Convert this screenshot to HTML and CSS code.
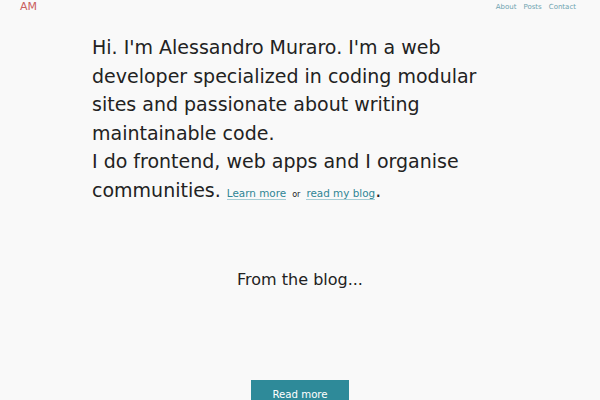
FILE: index.html
```html
<!DOCTYPE html>
<html>
<head>
<meta charset="utf-8">
<link rel="stylesheet" href="styles.css">
</head>
<body>
<header class="top">
  <a class="logo" href="#">AM</a>
  <nav class="nav">
    <a href="#">About</a>
    <a href="#">Posts</a>
    <a href="#">Contact</a>
  </nav>
</header>
<main>
  <section class="intro">
    <p>Hi. I'm Alessandro Muraro. I'm a web developer specialized in coding modular sites and passionate about writing maintainable code.<br>I do frontend, web apps and I organise communities. <a class="link" href="#">Learn more</a> <span class="or">or</span> <a class="link" href="#">read my blog</a>.</p>
  </section>
  <section class="blog">
    <h2 class="blog-title">From the blog...</h2>
    <div class="actions"><a class="btn" href="#">Read more</a></div>
  </section>
</main>
</body>
</html>
```
FILE: styles.css
```css
html, body {
  margin: 0;
  padding: 0;
}
body {
  background: #f9f9f9;
  color: #222;
  font-family: "DejaVu Sans", sans-serif;
  overflow: hidden;
}
a { text-decoration: none; }
.top {
  display: flex;
  justify-content: space-between;
  align-items: flex-start;
  padding: 0 24px 0 20px;
  height: 20px;
}
.logo {
  color: #c9605e;
  font-size: 11px;
  line-height: 13px;
}
.nav {
  display: flex;
  gap: 7px;
  font-size: 7px;
  line-height: 14px;
}
.nav a { color: #6ea3b0; }
.intro {
  width: 416px;
  margin: 0 auto;
  padding-top: 13px;
}
.intro p {
  margin: 0;
  font-size: 19px;
  line-height: 28.5px;
}
.link {
  font-size: 10.4px;
  line-height: 12px;
  color: #2f8595;
  border-bottom: 1px solid #a6cdd4;
}
.or {
  font-size: 8px;
  line-height: 10px;
}
.blog {
  text-align: center;
  padding-top: 64px;
}
.blog-title {
  margin: 0;
  font-weight: normal;
  font-size: 16px;
  line-height: 24px;
}
.actions {
  padding-top: 88px;
}
.btn {
  display: inline-block;
  width: 98px;
  height: 30px;
  background: #2e8a99;
  color: #fff;
  font-size: 10.2px;
  line-height: 28px;
  padding-top: 1px;
  box-sizing: border-box;
}
```
